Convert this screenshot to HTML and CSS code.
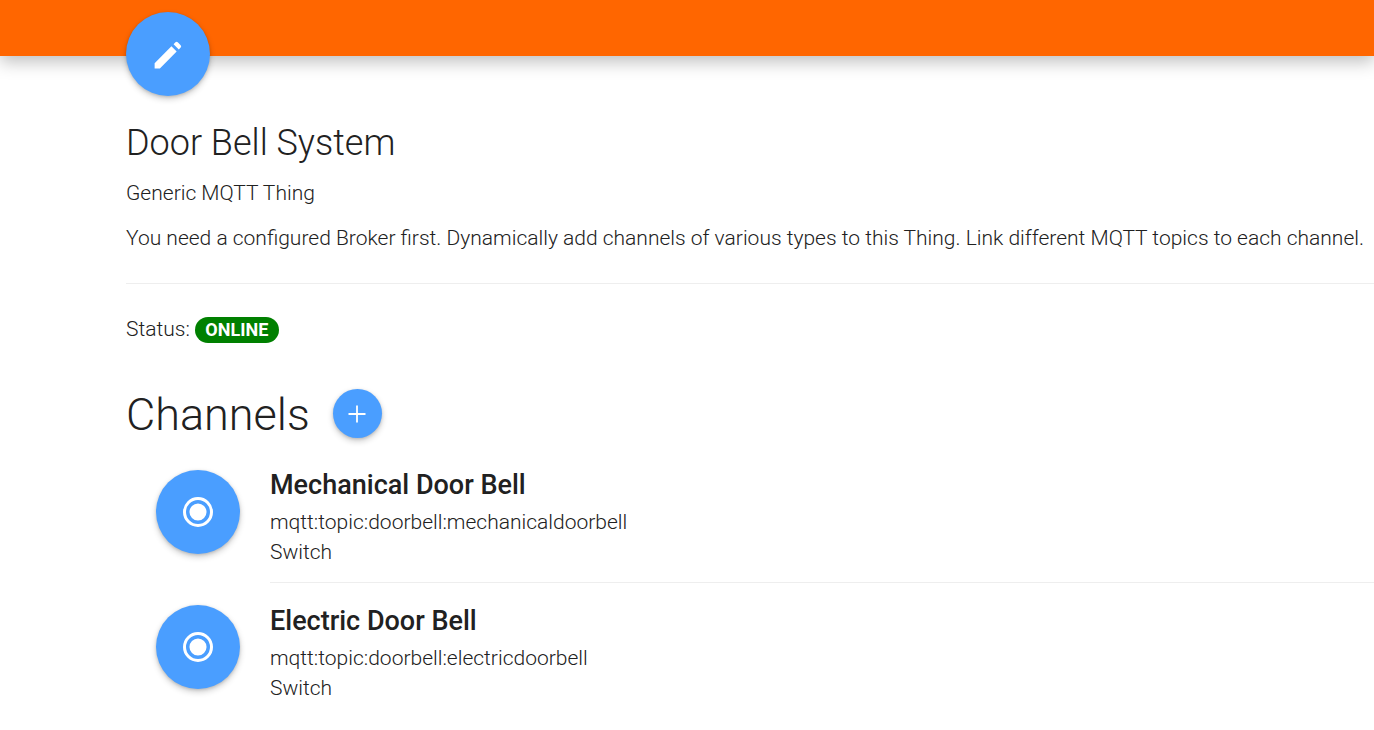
FILE: index.html
```html
<!DOCTYPE html>
<html lang="en">
<head>
<meta charset="utf-8">
<title>Door Bell System</title>
<link rel="stylesheet" href="styles.css">
</head>
<body>
<header class="topbar"></header>
<main class="page">
  <button class="fab fab-edit" aria-label="Edit">
    <svg viewBox="0 0 24 24" width="37" height="37"><path fill="#fff" d="M3 17.6V21h3.4L17.3 10.1l-3.4-3.4zM19.9 7.5l-1.2 1.2-3.4-3.4 1.2-1.2a1.1 1.1 0 0 1 1.5 0l1.9 1.9a1.1 1.1 0 0 1 0 1.5z"/></svg>
  </button>
  <h1 class="title">Door Bell System</h1>
  <p class="type">Generic MQTT Thing</p>
  <p class="desc">You need a configured Broker first. Dynamically add channels of various types to this Thing. Link different MQTT topics to each channel.</p>
  <hr class="rule">
  <p class="status">Status: <span class="badge">ONLINE</span></p>
  <div class="channels-head">
    <h2 class="channels-title">Channels</h2>
    <button class="fab fab-add" aria-label="Add channel">
      <svg viewBox="0 0 24 24" width="24" height="24"><path fill="#fff" d="M11.1 3.5h1.8v7.6h7.6v1.8h-7.6v7.6h-1.8v-7.6H3.5v-1.8h7.6z"/></svg>
    </button>
  </div>
  <ul class="channel-list">
    <li class="channel">
      <div class="avatar"><svg viewBox="0 0 24 24" width="36" height="36"><path fill="#fff" d="M12 6.3a5.7 5.7 0 1 0 0 11.4 5.7 5.7 0 0 0 0-11.4zM12 2a10 10 0 1 0 0 20 10 10 0 0 0 0-20zm0 18a8 8 0 1 1 0-16 8 8 0 0 1 0 16z"/></svg></div>
      <div class="channel-body">
        <h3 class="channel-name">Mechanical Door Bell</h3>
        <div class="channel-line">mqtt:topic:doorbell:mechanicaldoorbell</div>
        <div class="channel-line">Switch</div>
      </div>
    </li>
    <li class="channel">
      <div class="avatar"><svg viewBox="0 0 24 24" width="36" height="36"><path fill="#fff" d="M12 6.3a5.7 5.7 0 1 0 0 11.4 5.7 5.7 0 0 0 0-11.4zM12 2a10 10 0 1 0 0 20 10 10 0 0 0 0-20zm0 18a8 8 0 1 1 0-16 8 8 0 0 1 0 16z"/></svg></div>
      <div class="channel-body">
        <h3 class="channel-name">Electric Door Bell</h3>
        <div class="channel-line">mqtt:topic:doorbell:electricdoorbell</div>
        <div class="channel-line">Switch</div>
      </div>
    </li>
  </ul>
</main>
</body>
</html>
```
FILE: styles.css
```css
* { box-sizing: border-box; }
html, body { margin: 0; height: 100%; overflow: hidden; }
body {
  background: #fff;
  color: #212121;
  font-family: Roboto, "Liberation Sans", sans-serif;
  font-weight: 300;
  font-size: 21px;
}
.topbar {
  height: 56px;
  background: #ff6600;
  box-shadow: 0 6px 16px rgba(0,0,0,.25);
}
.page { padding-left: 126px; position: relative; }
.fab {
  display: flex;
  align-items: center;
  justify-content: center;
  border: 0;
  padding: 0;
  border-radius: 50%;
  background: #4a9eff;
  box-shadow: 0 3px 6px rgba(0,0,0,.2), 0 1px 3px rgba(0,0,0,.14);
}
.fab-edit {
  position: relative;
  width: 84px;
  height: 84px;
  margin-top: -44px;
}
.title {
  margin: 25px 0 0;
  font-size: 36px;
  font-weight: 300;
  line-height: 44px;
}
.type { margin: 13px 0 0; line-height: 30px; }
.desc { margin: 15px 0 0; line-height: 30px; white-space: nowrap; }
.rule { margin: 30px 0 0; border: 0; border-top: 1px solid #eee; }
.status { margin: 30px 0 0; line-height: 30px; display: flex; align-items: center; gap: 5px; }
.badge {
  display: inline-block;
  margin-top: 2px;
  background: #008000;
  color: #fff;
  font-size: 18px;
  font-weight: 700;
  line-height: 26px;
  padding: 0 10.5px;
  border-radius: 13px;
}
.channels-head { display: flex; align-items: flex-start; gap: 23px; margin-top: 40px; }
.channels-title { margin: 0; font-size: 45px; font-weight: 300; line-height: 62px; }
.fab-add { width: 49px; height: 49px; margin-top: 5px; }
.channel-list { list-style: none; margin: 2px 0 0; padding: 0 0 0 30px; }
.channel { display: flex; gap: 30px; }
.avatar {
  flex: none;
  width: 84px;
  height: 84px;
  margin-top: 22px;
  border-radius: 50%;
  background: #4a9eff;
  display: flex;
  align-items: center;
  justify-content: center;
  box-shadow: 0 3px 6px rgba(0,0,0,.2), 0 1px 3px rgba(0,0,0,.14);
}
.channel-body { flex: 1; padding: 22px 0 15px; border-bottom: 1px solid #eee; }
.channel:last-child .channel-body { padding-top: 23px; border-bottom: 0; }
.channel-name { margin: 0 0 7px; font-size: 27px; font-weight: 500; line-height: 30px; }
.channel-line { line-height: 30px; }
```
